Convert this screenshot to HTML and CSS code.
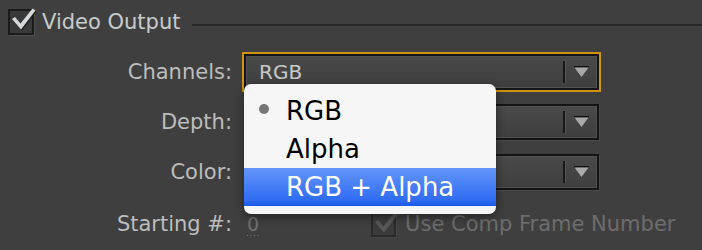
FILE: index.html
```html
<!DOCTYPE html>
<html>
<head>
<meta charset="utf-8">
<link rel="stylesheet" href="styles.css">
</head>
<body>
<div class="panel">
  <div class="section-head">
    <span class="checkbox">
      <svg class="check" width="30" height="30" viewBox="0 0 30 30"><polygon class="check-shadow" points="5,11 8,9 13.5,15.5 25.5,0.5 28.5,2.5 14,21.5"/><polygon class="check-fill" points="4,10 7,8 12.5,14.5 24.5,-0.5 27.5,1.5 13,20.5"/></svg>
    </span>
    <span class="section-title">Video Output</span>
    <span class="rule"></span>
  </div>

  <div class="form">
    <span class="label">Channels:</span>
    <div class="select focused">
      <span class="value">RGB</span>
      <span class="divider"></span>
      <span class="arrow"><svg width="15" height="12" viewBox="0 0 15 12"><rect x="0" y="0" width="15" height="1.5" fill="#111"/><polygon points="0.5,1.5 14.5,1.5 7.5,11" fill="#a9a9a9"/></svg></span>
    </div>

    <span class="label">Depth:</span>
    <div class="select">
      <span class="value"></span>
      <span class="divider"></span>
      <span class="arrow"><svg width="15" height="12" viewBox="0 0 15 12"><rect x="0" y="0" width="15" height="1.5" fill="#111"/><polygon points="0.5,1.5 14.5,1.5 7.5,11" fill="#a9a9a9"/></svg></span>
    </div>

    <span class="label">Color:</span>
    <div class="select">
      <span class="value"></span>
      <span class="divider"></span>
      <span class="arrow"><svg width="15" height="12" viewBox="0 0 15 12"><rect x="0" y="0" width="15" height="1.5" fill="#111"/><polygon points="0.5,1.5 14.5,1.5 7.5,11" fill="#a9a9a9"/></svg></span>
    </div>

    <span class="label">Starting #:</span>
    <div class="start-row">
      <span class="number">0</span>
      <span class="checkbox disabled">
        <svg class="check" width="30" height="30" viewBox="0 0 30 30"><polygon class="check-fill" points="4,10 7,8 12.5,14.5 24.5,-0.5 27.5,1.5 13,20.5"/></svg>
      </span>
      <span class="check-label">Use Comp Frame Number</span>
    </div>
  </div>

  <div class="menu">
    <div class="item selected"><span class="bullet"></span>RGB</div>
    <div class="item">Alpha</div>
    <div class="item highlighted">RGB + Alpha</div>
  </div>
</div>
</body>
</html>
```

FILE: styles.css
```css
html, body {
  margin: 0;
  padding: 0;
}

body {
  background: #3f3f3f;
  font-family: "DejaVu Sans", "Liberation Sans", sans-serif;
  width: 702px;
  height: 250px;
  overflow: hidden;
}

.panel {
  position: relative;
  height: 250px;
}

.section-head {
  display: flex;
  align-items: center;
  padding: 9px 0 0 8px;
  height: 26px;
}

.checkbox {
  position: relative;
  flex: none;
  box-sizing: border-box;
  width: 26px;
  height: 26px;
  border: 2px solid #1b1b1b;
  background: #393939;
  box-shadow: 1px 1px 0 #4d4d4d;
}

.check {
  position: absolute;
  left: -2px;
  top: -2px;
  overflow: visible;
}

.check-fill {
  fill: #d6d8da;
}

.check-shadow {
  fill: #1e1e1e;
}

.section-title {
  margin-left: 8px;
  font-size: 21px;
  color: #c7cbce;
  white-space: nowrap;
}

.rule {
  flex: 1;
  height: 2px;
  margin-left: 12px;
  margin-top: 6px;
  background: #272727;
}

.form {
  display: grid;
  grid-template-columns: 232px 355px;
  grid-template-rows: 36px 36px 36px 40px;
  column-gap: 12px;
  row-gap: 14px;
  margin-top: 19px;
}

.label {
  align-self: center;
  text-align: right;
  font-size: 21px;
  color: #bdbdbd;
  white-space: nowrap;
}

.select {
  box-sizing: border-box;
  height: 36px;
  display: flex;
  align-items: center;
  border: 2px solid #141414;
  background: linear-gradient(#4a4a4a, #3e3e3e);
  box-shadow: inset 0 0 0 1px #515151, 1px 1px 0 #4a4a4a;
}

.select.focused {
  outline: 2px solid #cf9512;
  box-shadow: inset 0 0 0 1px #515151;
}

.value {
  flex: 1;
  padding-left: 13px;
  font-size: 20px;
  line-height: 32px;
  height: 32px;
  color: #c9c9c9;
  white-space: nowrap;
  overflow: hidden;
}

.divider {
  flex: none;
  width: 2px;
  height: 22px;
  background: #181818;
  border-right: 1px solid #565656;
}

.arrow {
  flex: none;
  width: 31px;
  display: flex;
  justify-content: center;
  align-items: center;
}

.arrow svg {
  display: block;
}

.start-row {
  display: flex;
  align-items: center;
}

.number {
  width: 13px;
  margin-left: 3px;
  padding-bottom: 1px;
  font-size: 19px;
  line-height: 22px;
  color: #6f6f6f;
  background: linear-gradient(to right, #7c7c7c 1px, transparent 1px) repeat-x left bottom / 3.5px 1px;
}

.checkbox.disabled {
  width: 25px;
  height: 25px;
  margin-left: 112px;
  border-color: #2a2a2a;
  background: #3b3b3b;
  box-shadow: 1px 1px 0 #474747;
}

.checkbox.disabled .check-fill {
  fill: #585858;
}

.check-label {
  margin-left: 9px;
  font-size: 21px;
  color: #6d6d6d;
  white-space: nowrap;
}

.menu {
  position: absolute;
  left: 244px;
  top: 84px;
  width: 252px;
  padding: 8px 0;
  background: #f6f6f6;
  border-radius: 7px;
  box-shadow: 0 3px 10px rgba(0, 0, 0, 0.45);
}

.item {
  position: relative;
  height: 38px;
  line-height: 38px;
  padding-left: 42px;
  font-size: 26px;
  color: #000;
  white-space: nowrap;
}

.bullet {
  position: absolute;
  left: 15px;
  top: 12px;
  width: 10px;
  height: 10px;
  border-radius: 50%;
  background: #777;
}

.item.highlighted {
  color: #fff;
  background: linear-gradient(#6395f8, #2f6cf3 85%, #1a58e8);
}
```
